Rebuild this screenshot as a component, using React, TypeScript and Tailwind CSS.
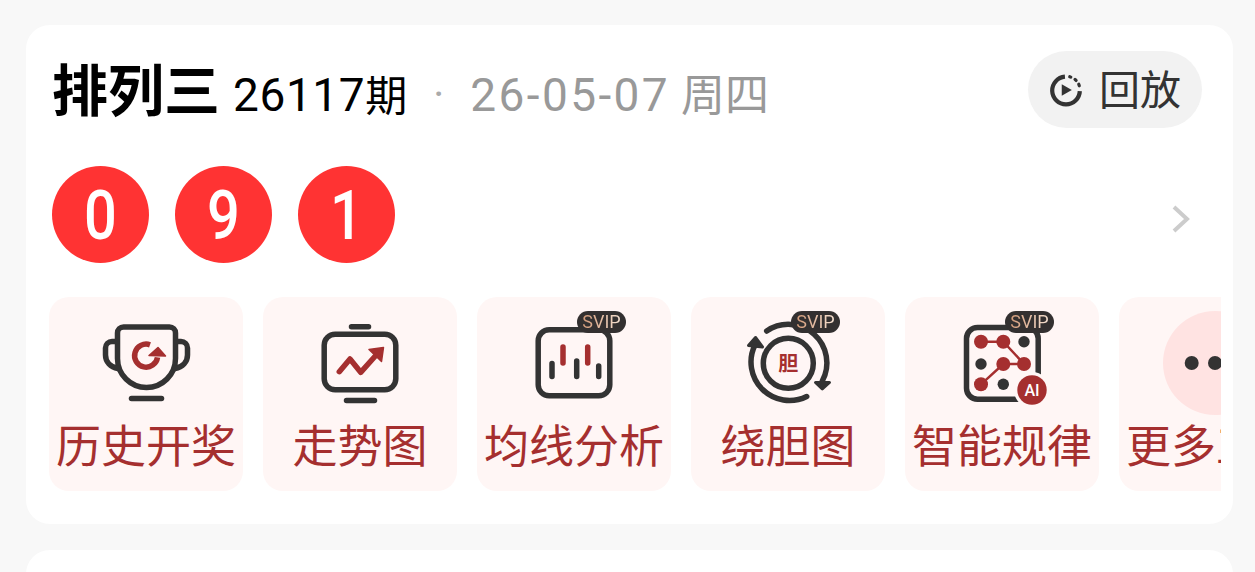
const cjk = "font-['Roboto','Noto_Sans_CJK_SC',sans-serif]";

function SvipBadge() {
  return (
    <div className="absolute left-[56px] top-0 flex h-[22px] w-[49px] items-center justify-center rounded-full bg-[#333030]">
      <span className="bg-linear-to-r from-[#d29a78] to-[#f6e2d2] bg-clip-text font-['Roboto',sans-serif] text-[18px] leading-none text-transparent">
        SVIP
      </span>
    </div>
  );
}

function TrophyIcon() {
  return (
    <svg viewBox="0 0 104 104" className="h-[104px] w-[104px]" fill="none" strokeLinecap="round" strokeLinejoin="round">
      <g stroke="#333" strokeWidth="5.500">
        <path d="M24.5 22a6 6 0 0 1 6-6h46a6 6 0 0 1 6 6v25.5a29 29 0 0 1-58 0z" />
        <path d="M24 30.5h-5a6.500 6.500 0 0 0-6.500 6.500v7c0 7 5 12 12.500 13.500" />
        <path d="M83 30.500h5a6.500 6.500 0 0 1 6.500 6.500v7c0 7-5 12-12.500 13.500" />
        <path d="M38.500 87.500h30" />
      </g>
      <path d="M57 33.800a11.500 11.500 0 1 0 7.500 12.500" stroke="#a52f2f" strokeWidth="5.500" strokeLinecap="butt" />
      <path d="M56 44.500l9-8 7.500 8.500z" fill="#a52f2f" stroke="#a52f2f" strokeWidth="1.500" />
    </svg>
  );
}

function TrendIcon() {
  return (
    <svg viewBox="0 0 104 104" className="h-[104px] w-[104px]" fill="none" strokeLinecap="round" strokeLinejoin="round">
      <g stroke="#333" strokeWidth="5.500">
        <rect x="17.200" y="23.200" width="71.600" height="55.600" rx="11" />
        <path d="M44.500 15.800h17M39.500 89.500h28" />
      </g>
      <path d="M32.300 60.700 43 48l10.700 13.300L71 42" stroke="#a52f2f" strokeWidth="5.500" />
      <path d="M62 38.500l14.500-2-2 14z" fill="#a52f2f" stroke="#a52f2f" strokeWidth="1.500" />
    </svg>
  );
}

function CandleIcon() {
  return (
    <svg viewBox="0 0 104 104" className="h-[104px] w-[104px]" fill="none" strokeLinecap="round">
      <rect x="17.200" y="18.800" width="71.600" height="66" rx="11" stroke="#333" strokeWidth="5.500" />
      <path d="M31 52.500v13M55.700 50v15.500M77.700 55v10.500" stroke="#333" strokeWidth="5.500" />
      <path d="M42 36v16M66.700 36v16" stroke="#a52f2f" strokeWidth="5.500" />
    </svg>
  );
}

function CycleIcon() {
  return (
    <svg viewBox="0 0 104 104" className="h-[104px] w-[104px]" fill="none" strokeLinecap="round" strokeLinejoin="round">
      <g stroke="#333" strokeWidth="5.500">
        <circle cx="53.300" cy="52.300" r="25" />
        <path d="M31.700 20A38.500 38.500 0 0 1 87.300 70" />
        <path d="M71.700 85.500A38.500 38.500 0 0 1 20 34" />
      </g>
      <path d="M80.500 71.500h14L87.300 78z" fill="#333" stroke="#333" strokeWidth="3" strokeLinejoin="round" />
      <path d="M13.500 34.500 20.500 26.500 27.500 36z" fill="#333" stroke="#333" strokeWidth="3" strokeLinejoin="round" />
      <text x="53.300" y="60" textAnchor="middle" fill="#a52f2f" fontSize="20" fontWeight="700" fontFamily="'Noto Sans CJK SC',sans-serif">
        胆
      </text>
    </svg>
  );
}

function PatternIcon() {
  return (
    <svg viewBox="0 0 104 104" className="h-[104px] w-[104px]" fill="none">
      <rect x="17.500" y="16.500" width="71.700" height="71.700" rx="11" stroke="#333" strokeWidth="5.500" />
      <g fill="#333">
        <circle cx="75" cy="30.700" r="5.700" />
        <circle cx="32" cy="53" r="5.700" />
        <circle cx="54.300" cy="73.300" r="5.700" />
      </g>
      <path d="M32 30.700h22.300L75 53H54.300L32 73.300" stroke="#a52f2f" strokeWidth="2.500" />
      <g fill="#a52f2f">
        <circle cx="32" cy="30.700" r="7" />
        <circle cx="54.300" cy="30.700" r="7" />
        <circle cx="54.300" cy="53" r="7" />
        <circle cx="75" cy="53" r="7" />
        <circle cx="32" cy="73.300" r="7" />
      </g>
      <circle cx="83" cy="79" r="18" fill="#fff6f5" />
      <circle cx="83" cy="79" r="14.700" fill="#a52f2f" />
      <text x="83" y="85" textAnchor="middle" fill="#fff" fontSize="16" fontWeight="500" fontFamily="Roboto,sans-serif">
        AI
      </text>
    </svg>
  );
}

function MoreIcon() {
  return (
    <svg viewBox="0 0 104 104" className="h-[104px] w-[104px]">
      <circle cx="52" cy="52" r="52" fill="#ffe3e2" />
      <circle cx="28.700" cy="52" r="7" fill="#333" />
      <circle cx="52" cy="52" r="7" fill="#333" />
      <circle cx="75.300" cy="52" r="7" fill="#333" />
    </svg>
  );
}

const tools = [
  { label: "历史开奖", icon: <TrophyIcon />, svip: false },
  { label: "走势图", icon: <TrendIcon />, svip: false },
  { label: "均线分析", icon: <CandleIcon />, svip: true },
  { label: "绕胆图", icon: <CycleIcon />, svip: true },
  { label: "智能规律", icon: <PatternIcon />, svip: true },
  { label: "更多工具", icon: <MoreIcon />, svip: false },
];

export default function App() {
  return (
    <div className={`flex h-[572px] flex-col overflow-hidden bg-[#f8f8f8] pl-[26px] pt-[25px] ${cjk}`}>
      <div className="h-[499px] w-[1207px] shrink-0 rounded-[24px] bg-white">
        <div className="flex items-start justify-between pl-[26px] pr-[31px] pt-[26px]">
          <div className="flex h-[77px] items-center pt-[4px]">
            <span className="text-[56px] font-bold leading-none text-black">排列三</span>
            <span className="ml-[13px] mt-[6px] text-[42px] leading-none text-black">
              <span className="text-[46px] tracking-[0.6px]">26117</span>期
            </span>
            <span className="ml-[26px] mt-[6px] text-[42px] leading-none text-[#aaa]">·</span>
            <span className="ml-[26px] mt-[6px] text-[44px] leading-none text-[#999]">
              <span className="text-[46px] tracking-[2.4px]">26-05-07</span> 周四
            </span>
          </div>
          <button className="flex h-[77px] w-[174px] items-center justify-center gap-[16px] rounded-full bg-[#f2f2f2] text-[41px] text-[#333]">
            <svg viewBox="0 0 32 32" className="h-[34px] w-[34px]" fill="none" stroke="#333" strokeWidth="4">
              <path d="M15 3.500A13 13 0 1 0 29 17" />
              <path d="M19.500 3.500l1 .4M24.500 6l1 1M28 10.500l.5 1.500" strokeWidth="3" strokeLinecap="round" />
              <path d="M12 10.500 21.500 16 12 21.500z" fill="#333" stroke="none" />
            </svg>
            <span className="mt-[3px] leading-none">回放</span>
          </button>
        </div>

        <div className="mt-[38px] flex items-center justify-between pl-[26px] pr-[43px]">
          <div className="flex gap-[26px]">
            {["0", "9", "1"].map((n, i) => (
              <div
                key={i}
                className="flex h-[97px] w-[97px] items-center justify-center rounded-full bg-[#ff3333] font-['Roboto',sans-serif] text-[68px] font-medium leading-none text-white"
              >
                <span className="mt-[3px] inline-block scale-x-85">{n}</span>
              </div>
            ))}
          </div>
          <svg viewBox="0 0 18 28" className="mt-[8px] h-[28px] w-[18px]" fill="none" stroke="#ccc" strokeWidth="4">
            <path d="M2 2l13 12L2 26" />
          </svg>
        </div>

        <div className="ml-[23px] mt-[34px] flex w-[1172px] gap-[20px] overflow-hidden">
          {tools.map((t) => (
            <div key={t.label} className="flex h-[194px] w-[194px] shrink-0 flex-col items-center rounded-[20px] bg-[#fff6f5] pt-[14px]">
              <div className="relative mr-[2px] h-[104px] w-[104px]">
                {t.icon}
                {t.svip && <SvipBadge />}
              </div>
              <div className="mt-[9px] whitespace-nowrap text-[45px] leading-[48px] text-[#a52f2f]">{t.label}</div>
            </div>
          ))}
        </div>
      </div>
      <div className="mt-[26px] h-[60px] w-[1207px] shrink-0 rounded-[24px] bg-white" />
    </div>
  );
}
